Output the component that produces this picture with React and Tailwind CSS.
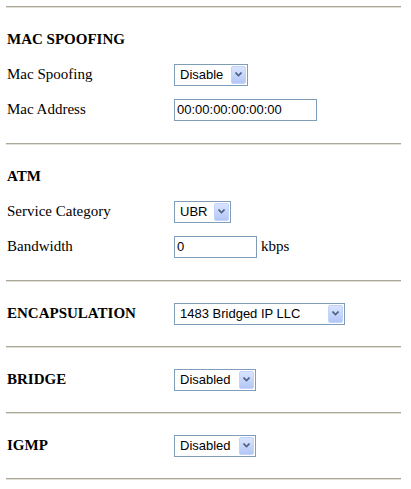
const serif = { fontFamily: '"Liberation Serif", "Times New Roman", serif' };
const sans = { fontFamily: '"Liberation Sans", Arial, sans-serif' };

function Divider() {
  return <div className="ml-[6px] w-[395px] h-[2px] border-t border-[#aca899] border-b border-b-[#e2e0d6]" />;
}

function Arrow() {
  return (
    <span className="flex items-center justify-center w-[15px] h-[18px] mr-[1px] rounded-[2px] border border-[#c3d3fd] bg-gradient-to-b from-[#d9e4fe] to-[#b3c7f5]">
      <svg width="7" height="5" viewBox="0 0 7 5">
        <path d="M0.5 0.5 L3.5 3.5 L6.5 0.5" fill="none" stroke="#4d6185" strokeWidth="1.6" />
      </svg>
    </span>
  );
}

function Select({ value, width }) {
  return (
    <div
      className="flex items-center justify-between h-[22px] border border-[#7f9db9] bg-white text-[13px] text-black"
      style={{ ...sans, width }}
    >
      <span className="pl-[5px] leading-none">{value}</span>
      <Arrow />
    </div>
  );
}

function TextBox({ value, width }) {
  return (
    <div
      className="flex items-center h-[22px] border border-[#7f9db9] bg-white text-[13px] text-black"
      style={{ ...sans, width }}
    >
      <span className="pl-[2px] leading-none">{value}</span>
    </div>
  );
}

function Row({ label, bold, children }) {
  return (
    <div className="flex items-center h-[35px]">
      <div className={"w-[167px] text-[15px] text-black " + (bold ? "font-bold" : "")} style={serif}>
        {label}
      </div>
      {children}
    </div>
  );
}

function Section({ multi, children }) {
  return (
    <div>
      <Divider />
      <div className={"pl-[7px] pt-[14px] " + (multi ? "pb-[16px]" : "pb-[15px]")}>{children}</div>
    </div>
  );
}

export default function App() {
  return (
    <div className="w-[411px] h-[489px] bg-white pt-[6px]">
      <Section multi>
        <Row label="MAC SPOOFING" bold />
        <Row label="Mac Spoofing">
          <Select value="Disable" width="74px" />
        </Row>
        <Row label="Mac Address">
          <TextBox value="00:00:00:00:00:00" width="143px" />
        </Row>
      </Section>
      <Section multi>
        <Row label="ATM" bold />
        <Row label="Service Category">
          <Select value="UBR" width="57px" />
        </Row>
        <Row label="Bandwidth">
          <TextBox value="0" width="83px" />
          <span className="ml-[4px] text-[15px] text-black" style={serif}>kbps</span>
        </Row>
      </Section>
      <Section>
        <Row label="ENCAPSULATION" bold>
          <Select value="1483 Bridged IP LLC" width="171px" />
        </Row>
      </Section>
      <Section>
        <Row label="BRIDGE" bold>
          <Select value="Disabled" width="82px" />
        </Row>
      </Section>
      <Section>
        <Row label="IGMP" bold>
          <Select value="Disabled" width="82px" />
        </Row>
      </Section>
      <Divider />
    </div>
  );
}
